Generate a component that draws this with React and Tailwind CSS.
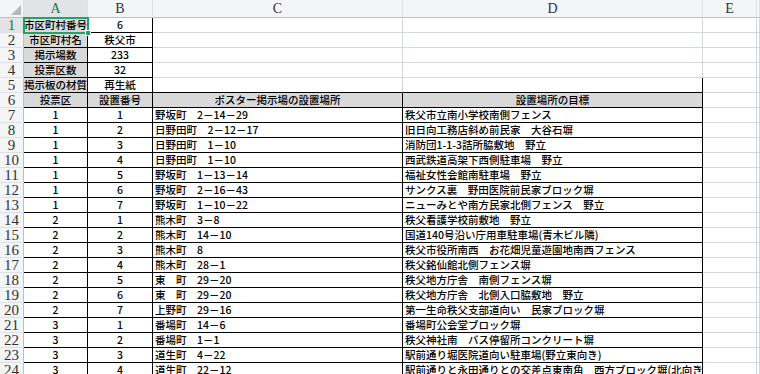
import React from "react";

// 秩父市 ポスター掲示場 一覧 (spreadsheet view)

const meta = [
  ["市区町村番号", "6"],
  ["市区町村名", "秩父市"],
  ["掲示場数", "233"],
  ["投票区数", "32"],
  ["掲示板の材質", "再生紙"],
];

const rows = [
  ["1", "1", "野坂町　2－14－29", "秩父市立南小学校南側フェンス"],
  ["1", "2", "日野田町　2－12－17", "旧日向工務店斜め前民家　大谷石塀"],
  ["1", "3", "日野田町　1－10", "消防団1-1-3詰所脇敷地　野立"],
  ["1", "4", "日野田町　1－10", "西武鉄道高架下西側駐車場　野立"],
  ["1", "5", "野坂町　1－13－14", "福祉女性会館南駐車場　野立"],
  ["1", "6", "野坂町　2－16－43", "サンクス裏　野田医院前民家ブロック塀"],
  ["1", "7", "野坂町　1－10－22", "ニューみとや南方民家北側フェンス　野立"],
  ["2", "1", "熊木町　3－8", "秩父看護学校前敷地　野立"],
  ["2", "2", "熊木町　14－10", "国道140号沿い庁用車駐車場(青木ビル隣)"],
  ["2", "3", "熊木町　8", "秩父市役所南西　お花畑児童遊園地南西フェンス"],
  ["2", "4", "熊木町　28－1", "秩父銘仙館北側フェンス塀"],
  ["2", "5", "東　町　29－20", "秩父地方庁舎　南側フェンス塀"],
  ["2", "6", "東　町　29－20", "秩父地方庁舎　北側入口脇敷地　野立"],
  ["2", "7", "上野町　29－16", "第一生命秩父支部道向い　民家ブロック塀"],
  ["3", "1", "番場町　14－6", "番場町公会堂ブロック塀"],
  ["3", "2", "番場町　1－1", "秩父神社南　バス停留所コンクリート塀"],
  ["3", "3", "道生町　4－22", "駅前通り堀医院道向い駐車場(野立東向き)"],
  ["3", "4", "道生町　22－12", "駅前通りと永田通りとの交差点東南角　西方ブロック塀(北向き)"],
];

const cols = ["A", "B", "C", "D", "E", ""];

const grid = "border-r border-b border-[#d3d7e0]";
const black = "border-r border-b border-black";
const cellText = "flex items-center text-[10.5px] font-medium leading-none text-black whitespace-nowrap overflow-hidden";

function Cell({ className = "", children }) {
  return <div className={`${cellText} ${className}`}>{children}</div>;
}

function RowHead({ n, active }) {
  return (
    <div
      className={`flex items-center justify-center border-r border-b text-[15px] leading-none border-r-[#b9bfcc] border-b-[#dde0e6] ${
        active ? "bg-[#e1e3e6] text-[#217346]" : "bg-[#f4f5f7] text-[#333]"
      }`}
      style={{ fontFamily: '"Liberation Serif", serif' }}
    >
      {n}
    </div>
  );
}

export default function App() {
  return (
    <div
      className="relative w-[760px] h-[374px] overflow-hidden bg-white"
      style={{ fontFamily: '"Noto Sans CJK JP", "Liberation Sans", sans-serif' }}
    >
      <div className="grid grid-cols-[24px_64px_65px_250px_300px_54px_1fr] auto-rows-[15px] [grid-template-rows:18px]">
        {/* corner */}
        <div className="relative h-[18px] bg-[#f4f5f7] border-r border-b border-r-[#dde0e6] border-b-[#b9bfcc]">
          <svg className="absolute right-[2px] bottom-[2px]" width="10" height="10" viewBox="0 0 10 10">
            <polygon points="10,0 10,10 0,10" fill="#b4b8bf" />
          </svg>
        </div>
        {cols.map((c, i) => (
          <div
            key={i}
            className={`h-[18px] flex items-center justify-center text-[14px] leading-none border-r border-b border-r-[#dde0e6] border-b-[#b9bfcc] ${
              c === "A" ? "bg-[#e1e3e6] text-[#217346]" : "bg-[#f4f5f7] text-[#333]"
            }`}
            style={{ fontFamily: '"Liberation Serif", serif' }}
          >
            {c}
          </div>
        ))}

        {/* rows 1-5 */}
        {meta.map(([k, v], i) => (
          <React.Fragment key={k}>
            <RowHead n={i + 1} active={i === 0} />
            <Cell className={`${black} bg-[#d9d9d9] justify-center`}>{k}</Cell>
            <Cell className={`${black} justify-center`}>{v}</Cell>
            <Cell className={i === 4 ? "border-r border-b border-r-[#d3d7e0] border-b-black" : grid} />
            <Cell className={i === 4 ? "border-r border-b border-black" : grid} />
            <Cell className={grid} />
            <Cell className={grid} />
          </React.Fragment>
        ))}

        {/* row 6 header */}
        <RowHead n={6} />
        <Cell className={`${black} bg-[#d9d9d9] justify-center`}>投票区</Cell>
        <Cell className={`${black} bg-[#d9d9d9] justify-center`}>設置番号</Cell>
        <Cell className={`${black} bg-[#d9d9d9] justify-center`}>ポスター掲示場の設置場所</Cell>
        <Cell className={`${black} bg-[#d9d9d9] justify-center`}>設置場所の目標</Cell>
        <Cell className={grid} />
        <Cell className={grid} />

        {/* data rows */}
        {rows.map((r, i) => (
          <React.Fragment key={i}>
            <RowHead n={i + 7} />
            <Cell className={`${black} justify-center`}>{r[0]}</Cell>
            <Cell className={`${black} justify-center`}>{r[1]}</Cell>
            <Cell className={`${black} pl-[2px]`}>{r[2]}</Cell>
            <Cell className={`${black} pl-[2px]`}>{r[3]}</Cell>
            <Cell className={grid} />
            <Cell className={grid} />
          </React.Fragment>
        ))}
      </div>

      {/* active cell A1 */}
      <div className="absolute left-[23px] top-[17px] w-[66px] h-[17px] border-2 border-[#21a366]" />
      <div className="absolute left-[85px] top-[30px] w-[6px] h-[6px] bg-[#21a366] border border-white" />
    </div>
  );
}
